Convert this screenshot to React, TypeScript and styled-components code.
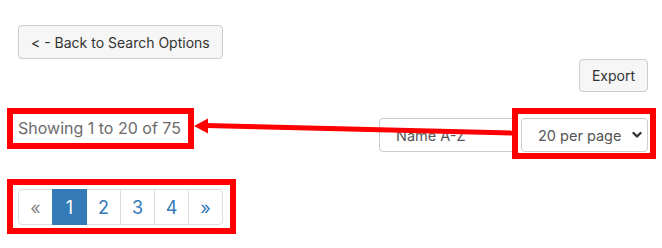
import React from 'react'
import styled, { createGlobalStyle } from 'styled-components'

const GlobalStyle = createGlobalStyle`
  html, body {
    margin: 0;
    padding: 0;
    background: #fff;
    font-family: Inter, "Liberation Sans", Arial, sans-serif;
  }
`

const Page = styled.div`
  position: relative;
  width: 662px;
  height: 248px;
  box-sizing: border-box;
  padding: 25px 14px 0 7px;
  overflow: hidden;
`

const TopRow = styled.div`
  padding-left: 11px;
`

const Button = styled.button`
  display: inline-block;
  box-sizing: border-box;
  height: ${(p: { h?: number }) => p.h || 34}px;
  padding: 0 12px;
  font-family: Inter, "Liberation Sans", Arial, sans-serif;
  font-size: 14px;
  color: #333;
  background: #f6f6f6;
  border: 1px solid #ccc;
  border-radius: 4px;
  cursor: pointer;
`

const ToolRow = styled.div`
  display: flex;
  justify-content: flex-end;
`

const ListRow = styled.div`
  display: flex;
  justify-content: space-between;
  align-items: flex-start;
  margin-top: 16px;
`

const Highlight = styled.div<{ pad: string }>`
  position: relative;
  z-index: 1;
  box-sizing: border-box;
  border: 6px solid #ff0000;
  padding: ${(p) => p.pad};
  background: transparent;
`

const Summary = styled.div`
  font-size: 16px;
  line-height: 29px;
  color: #6b6b6b;
  white-space: nowrap;
`

const Controls = styled.div`
  display: flex;
  align-items: flex-start;
  margin-right: -8px;
`

const SelectBox = styled.div<{ w: number; overlap?: boolean }>`
  display: flex;
  align-items: center;
  justify-content: space-between;
  box-sizing: border-box;
  width: ${(p) => p.w}px;
  height: 34px;
  padding: 0 5px 0 16px;
  margin-top: ${(p) => (p.overlap ? 10 : 0)}px;
  margin-right: ${(p) => (p.overlap ? -6 : 0)}px;
  font-size: 14.5px;
  color: #555;
  background: #fff;
  border: 1px solid #ccc;
  border-radius: 4px;
  white-space: nowrap;
`

const PagerRow = styled.div`
  display: flex;
  margin-top: 20px;
`

const Pager = styled.ul`
  display: flex;
  list-style: none;
  margin: 0;
  padding: 0;
`

const PageItem = styled.li<{ active?: boolean; disabled?: boolean }>`
  display: flex;
  align-items: center;
  justify-content: center;
  box-sizing: border-box;
  width: 35px;
  height: 36px;
  margin-left: -1px;
  font-size: 18px;
  color: ${(p) => (p.active ? '#fff' : p.disabled ? '#888' : '#337ab7')};
  background: ${(p) => (p.active ? '#337ab7' : '#fff')};
  border: 1px solid ${(p) => (p.active ? '#337ab7' : '#ddd')};
  position: relative;
  z-index: ${(p) => (p.active ? 2 : 0)};

  &:first-child {
    margin-left: 0;
    border-radius: 4px 0 0 4px;
  }
  &:last-child {
    border-radius: 0 4px 4px 0;
  }
`

const Annotation = styled.svg`
  position: absolute;
  left: 0;
  top: 0;
  z-index: 3;
  pointer-events: none;
`

const Chevron = () => (
  <svg width="10" height="8" viewBox="0 0 10 8">
    <path d="M1.5 2 L5 5.5 L8.5 2" fill="none" stroke="#333" strokeWidth="2.4" strokeLinecap="round" strokeLinejoin="round" />
  </svg>
)

const pages = ['«', '1', '2', '3', '4', '»']

export default function App() {
  return (
    <>
      <GlobalStyle />
      <Page>
        <TopRow>
          <Button>&lt; - Back to Search Options</Button>
        </TopRow>
        <ToolRow>
          <Button h={33}>Export</Button>
        </ToolRow>
        <ListRow>
          <Highlight pad="0 7px 0 5px">
            <Summary>Showing 1 to 20 of 75</Summary>
          </Highlight>
          <Controls>
            <SelectBox w={139} overlap>
              Name A-Z
            </SelectBox>
            <Highlight pad="4px 2px 1px 3px">
              <SelectBox w={127}>
                20 per page
                <Chevron />
              </SelectBox>
            </Highlight>
          </Controls>
        </ListRow>
        <PagerRow>
          <Highlight pad="4px 7px 3px 5px">
            <Pager>
              {pages.map((p, i) => (
                <PageItem key={p} active={p === '1'} disabled={i === 0}>
                  {p}
                </PageItem>
              ))}
            </Pager>
          </Highlight>
        </PagerRow>
        <Annotation width="662" height="248">
          <line x1="206" y1="125.5" x2="513" y2="133" stroke="#ff0000" strokeWidth="5" />
          <polygon points="194,126 208,118.5 208,133.5" fill="#ff0000" />
        </Annotation>
      </Page>
    </>
  )
}
